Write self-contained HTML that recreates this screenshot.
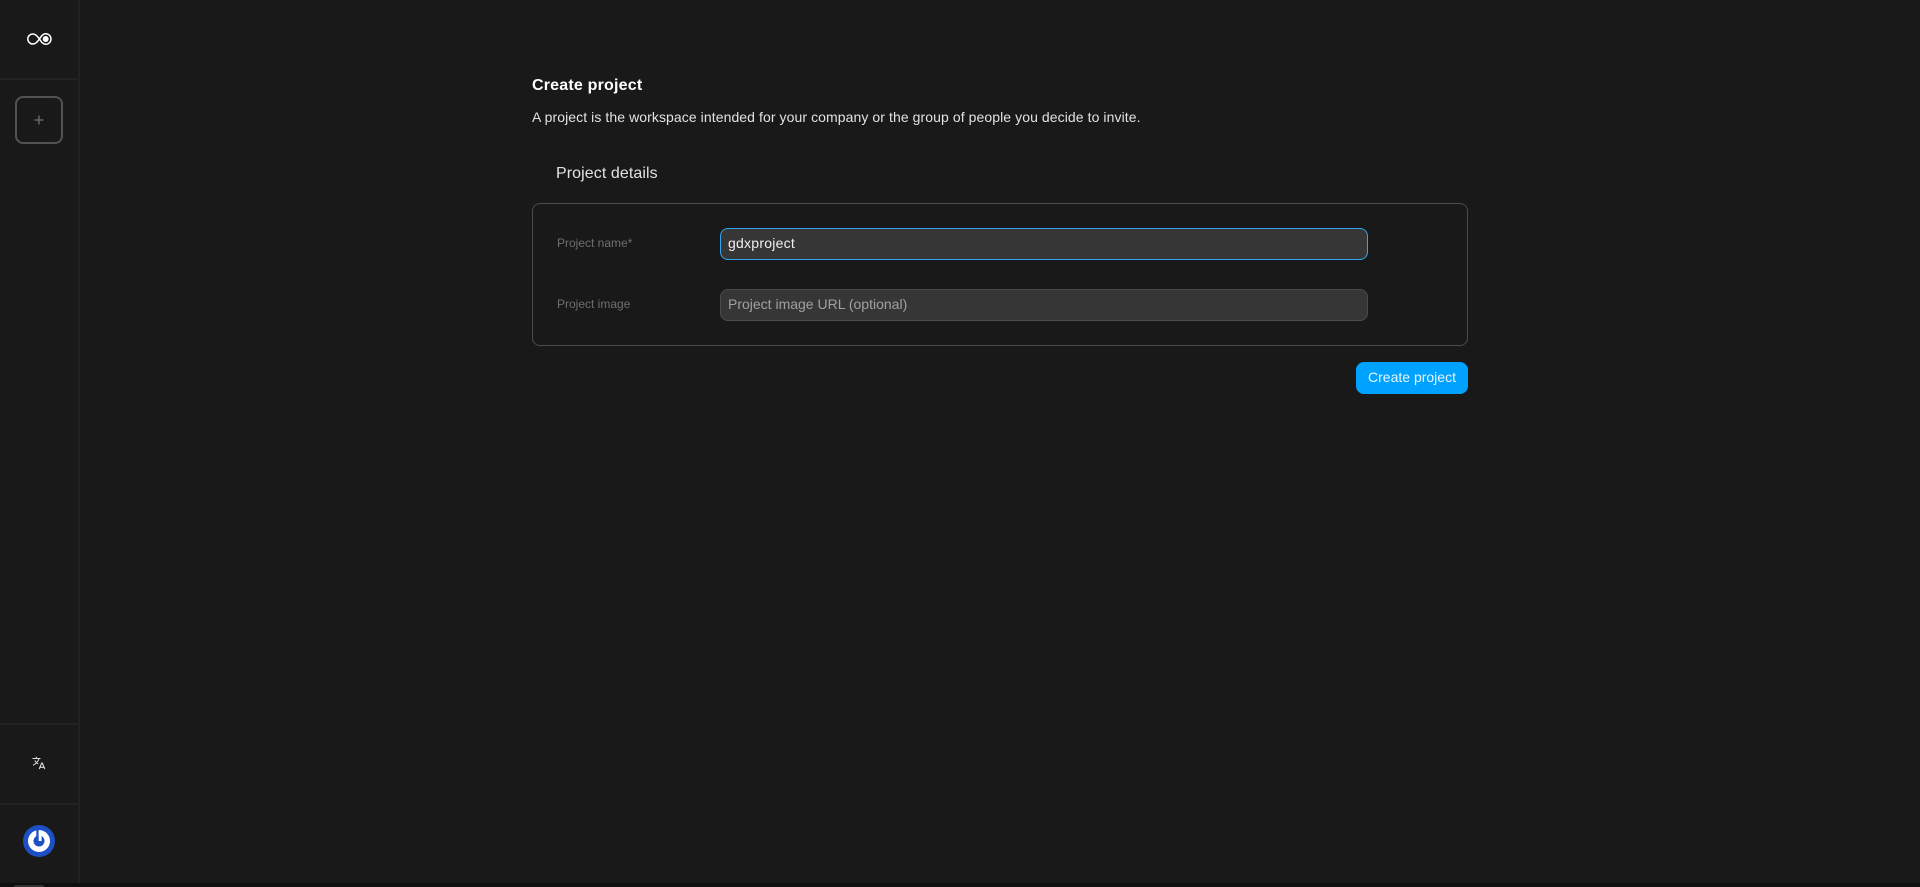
<!DOCTYPE html>
<html lang="en">
<head>
<meta charset="utf-8">
<title>Create project</title>
<style>
html,body{margin:0;padding:0;width:1920px;height:887px;overflow:hidden;background:#0f0f0f;font-family:"Liberation Sans",sans-serif}
.page{position:absolute;left:0;top:0;width:1920px;height:883px;background:#191919}
.a{position:absolute;white-space:nowrap}
.line{position:absolute;background:#222}
.field{position:absolute;left:720px;width:648px;height:32px;box-sizing:border-box;background:#363636;border-radius:8px;border:1px solid #4b4b4b;font-size:14px;line-height:29px;padding-left:7px}
</style>
</head>
<body>
<div class="page">
  <div class="line" style="left:78px;top:0;width:2px;height:883px"></div>
  <div class="line" style="left:0;top:78px;width:78px;height:2px"></div>
  <div class="line" style="left:0;top:723px;width:78px;height:2px"></div>
  <div class="line" style="left:0;top:803px;width:78px;height:2px"></div>

  <svg class="a" style="left:26px;top:30px" width="26" height="18" viewBox="0 0 26 18">
    <path d="M13.500 9C11 5.800 9.500 4 6.800 4A5 5 0 0 0 6.800 14C9.500 14 11 12.200 13.500 9C15.500 5.800 17 3.700 19.700 3.700A5.300 5.300 0 0 1 19.700 14.300C17 14.300 15.500 12.200 13.500 9Z" fill="none" stroke="#fff" stroke-width="1.500"/>
    <circle cx="19.700" cy="9" r="3" fill="#fff"/>
  </svg>

  <div class="a" style="left:15px;top:96px;width:48px;height:48px;box-sizing:border-box;border:2px solid #525252;border-radius:8px"></div>
  <svg class="a" style="left:33px;top:114px" width="12" height="12" viewBox="0 0 12 12">
    <path d="M6 1.500V10.500M1.500 6H10.500" stroke="#666" stroke-width="1.500" fill="none"/>
  </svg>

  <svg class="a" style="left:32px;top:756px" width="14" height="14" viewBox="0 0 14 14">
    <path d="M0.500 2.500H8.500M4.300 0.800V2.500M7 2.500C6.300 5.200 4 7.800 1 9.300M2.800 4.500C3.700 6.200 4.900 7.200 6.300 8" fill="none" stroke="#dcdcdc" stroke-width="1"/>
    <path d="M7.200 13L9.700 7H10.300L12.800 13M8.100 11.300H11.900" fill="none" stroke="#dcdcdc" stroke-width="1.100"/>
  </svg>

  <svg class="a" style="left:23px;top:825px" width="32" height="32" viewBox="0 0 32 32">
    <circle cx="16" cy="16" r="16" fill="#1c50c4"/>
    <circle cx="16" cy="16" r="11" fill="#fff"/>
    <circle cx="16" cy="16" r="5.500" fill="#1c50c4"/>
    <rect x="13.300" y="4.500" width="2.400" height="7" fill="#1c50c4"/>
    <rect x="15.700" y="6" width="2.900" height="10" fill="#fff"/>
  </svg>

  <div class="a" style="left:532px;top:77px;font-size:16px;line-height:18px;font-weight:700;letter-spacing:.2px;color:#fff">Create project</div>
  <div class="a" style="left:532px;top:109px;font-size:14px;line-height:17px;letter-spacing:.08px;color:#e2e2e2">A project is the workspace intended for your company or the group of people you decide to invite.</div>
  <div class="a" style="left:556px;top:164px;font-size:16px;line-height:19px;letter-spacing:.08px;color:#e2e2e2">Project details</div>

  <div class="a" style="left:532px;top:203px;width:936px;height:143px;box-sizing:border-box;border:1px solid #4b4b4b;border-radius:8px"></div>

  <div class="a" style="left:557px;top:236px;font-size:12px;line-height:15px;color:#6f6f6f">Project name*</div>
  <div class="field" style="top:228px;border-color:#2fa6ee;color:#f0f0f0;letter-spacing:.24px">gdxproject</div>

  <div class="a" style="left:557px;top:297px;font-size:12px;line-height:15px;color:#6f6f6f">Project image</div>
  <div class="field" style="top:289px;color:#a0a0a0">Project image URL (optional)</div>

  <div class="a" style="left:1356px;top:362px;width:112px;height:32px;border-radius:8px;background:#00a2ff;color:#e8f6ff;font-size:14px;line-height:31px;text-align:center">Create project</div>
</div>
<div class="a" style="left:14px;top:885px;width:30px;height:2px;background:#333;border-radius:2px 2px 0 0"></div>
</body>
</html>
